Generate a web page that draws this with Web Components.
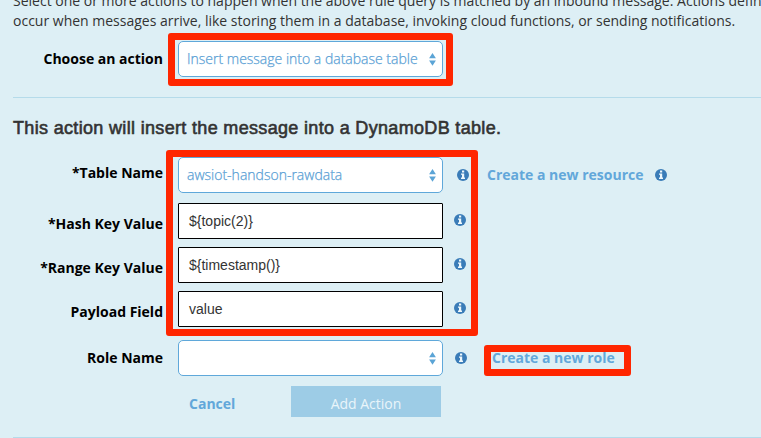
<!DOCTYPE html>
<html lang="en">
<head>
<meta charset="utf-8">
<title>Choose an action</title>
<style>
body{margin:0;background:#ddeff5;overflow:hidden}
</style>
</head>
<body>
<rule-action-page></rule-action-page>
<script>
class InfoIcon extends HTMLElement{
  constructor(){super();this.attachShadow({mode:'open'}).innerHTML=`
<style>:host{display:block;width:12px;height:12px;flex:none}svg{display:block}</style>
<svg width="12" height="12" viewBox="0 0 12 12"><circle cx="6" cy="6" r="6" fill="#3a7cb8"/><path fill="#eef8fc" d="M5 1.5h2.2v2H5zM4 4.4h3.2v4.2H8V10H4V8.6h1V5.8H4z"/></svg>`}
}
customElements.define('info-icon',InfoIcon);

class SelectBox extends HTMLElement{
  constructor(){super();this.attachShadow({mode:'open'}).innerHTML=`
<style>
:host{box-sizing:border-box;display:flex;align-items:center;justify-content:space-between;width:265px;height:36px;flex:none;padding:0 6px 0 8px;border:1px solid #5fa8da;border-radius:5px;background:#fff;color:#5a9fd5;font-weight:300;-webkit-text-stroke:.25px #5a9fd5;white-space:nowrap}
span{padding-bottom:2px}
svg{display:block;flex:none}
</style>
<span><slot></slot></span>
<svg width="7" height="13" viewBox="0 0 7 13"><path fill="#5ba4d6" d="M3.5 0 6.9 5.2H.1zM.1 7.4h6.8L3.5 12.8z"/></svg>`}
}
customElements.define('select-box',SelectBox);

class TextBox extends HTMLElement{
  constructor(){super();this.attachShadow({mode:'open'}).innerHTML=`
<style>:host{box-sizing:border-box;display:flex;align-items:center;width:265px;height:36px;flex:none;padding:0 10px;border:1px solid #000;border-radius:1px;background:#fff;color:#333;font:14px "Liberation Sans",Arial,sans-serif;white-space:nowrap}</style>
<span><slot></slot></span>`}
}
customElements.define('text-box',TextBox);

class FormRow extends HTMLElement{
  constructor(){super();this.attachShadow({mode:'open'}).innerHTML=`
<style>
:host{display:flex;align-items:center;height:36px}
.label{width:163px;margin-right:15px;flex:none;text-align:right;font-weight:700;color:#000;line-height:20px;padding-top:var(--label-drop,0px);padding-bottom:var(--label-lift,0px);box-sizing:border-box}
.after{display:flex;align-items:center;padding-bottom:var(--after-lift,0px)}
</style>
<div class="label"><slot name="label"></slot></div><slot></slot><div class="after"><slot name="after"></slot></div>`}
}
customElements.define('form-row',FormRow);

class ActionLink extends HTMLElement{
  constructor(){super();this.attachShadow({mode:'open'}).innerHTML=`
<style>:host{display:block;line-height:20px;font-weight:700;color:#62a7da;white-space:nowrap}</style><slot></slot>`}
}
customElements.define('action-link',ActionLink);

class ActionButton extends HTMLElement{
  constructor(){super();this.attachShadow({mode:'open'}).innerHTML=`
<style>:host{display:flex;align-items:center;justify-content:center;width:150px;height:31px;background:#9dcce6;color:#e9f5fa;padding-top:4px;box-sizing:border-box}</style><span><slot></slot></span>`}
}
customElements.define('action-button',ActionButton);

class CalloutFrame extends HTMLElement{
  constructor(){super();this.attachShadow({mode:'open'}).innerHTML=`
<style>:host{position:absolute;box-sizing:border-box;border:7px solid #ff2600;border-radius:3px;pointer-events:none}</style>`}
}
customElements.define('callout-frame',CalloutFrame);

class RuleActionPage extends HTMLElement{
  constructor(){super();this.attachShadow({mode:'open'}).innerHTML=`
<style>
:host{display:block;position:relative;width:761px;height:438px;overflow:hidden;background:#ddeff5;font:14px "Open Sans","Noto Sans",sans-serif;color:#333}
.intro{margin:-9px 0 0 13px;line-height:20px;white-space:nowrap}
.intro div{height:20px}
hr{border:0;height:1px;background:#b5dbea;margin:20px 0 0 13px}
h2{margin:19px 0 18px 13px;font:18px/22px "Liberation Sans",Arial,sans-serif;height:22px;letter-spacing:.33px;-webkit-text-stroke:.6px #333;white-space:nowrap}
.choose{margin-top:10px}
.fields{display:flex;flex-direction:column;gap:8px}
.fields form-row:first-child{margin-bottom:2px;--label-lift:4px}
.text{--label-drop:6px;--after-lift:2px}
.role{margin-top:13px}
.buttons{display:flex;margin:10px 0 0 189px;height:31px}
.buttons action-link{width:102px;padding-top:8px}
</style>
<div class="intro"><div>Select one or more actions to happen when the above rule query is matched by an inbound message. Actions define what will</div><div>occur when messages arrive, like storing them in a database, invoking cloud functions, or sending notifications.</div></div>
<form-row class="choose"><span slot="label">Choose an action</span><select-box>Insert message into a database table</select-box></form-row>
<hr>
<h2>This action will insert the message into a DynamoDB table.</h2>
<div class="fields">
<form-row><span slot="label">*Table Name</span><select-box>awsiot-handson-rawdata</select-box><info-icon slot="after" style="margin-left:14px"></info-icon><action-link slot="after" style="margin-left:18px">Create a new resource</action-link><info-icon slot="after" style="margin-left:12px"></info-icon></form-row>
<form-row class="text"><span slot="label">*Hash Key Value</span><text-box>\${topic(2)}</text-box><info-icon slot="after" style="margin-left:11px"></info-icon></form-row>
<form-row class="text"><span slot="label">*Range Key Value</span><text-box>\${timestamp()}</text-box><info-icon slot="after" style="margin-left:11px"></info-icon></form-row>
<form-row class="text"><span slot="label">Payload Field</span><text-box>value</text-box><info-icon slot="after" style="margin-left:11px"></info-icon></form-row>
</div>
<form-row class="role"><span slot="label">Role Name</span><select-box></select-box><info-icon slot="after" style="margin-left:12px"></info-icon><action-link slot="after" style="margin-left:25px">Create a new role</action-link></form-row>
<div class="buttons"><action-link>Cancel</action-link><action-button>Add Action</action-button></div>
<hr>
<callout-frame style="left:167.5px;top:33px;width:285.5px;height:53px"></callout-frame>
<callout-frame style="left:166px;top:149.5px;width:312px;height:186.5px"></callout-frame>
<callout-frame style="left:484px;top:345px;width:147px;height:31px"></callout-frame>`}
}
customElements.define('rule-action-page',RuleActionPage);
</script>
</body>
</html>
